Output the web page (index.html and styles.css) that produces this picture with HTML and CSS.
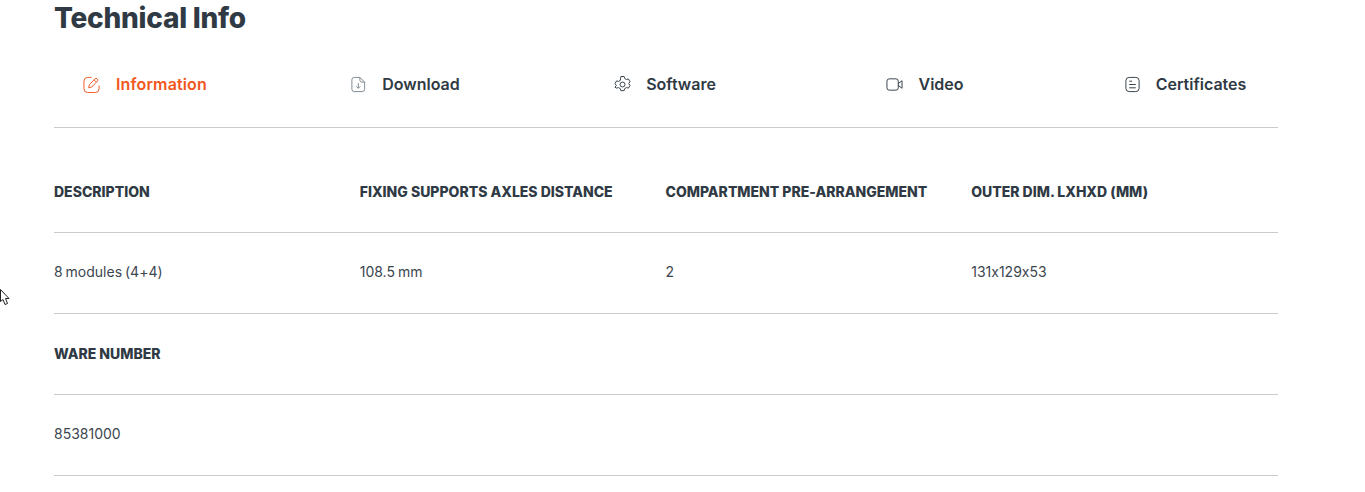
FILE: index.html
```html
<!DOCTYPE html>
<html lang="en">
<head>
<meta charset="utf-8">
<title>Technical Info</title>
<link rel="stylesheet" href="styles.css">
</head>
<body>
<svg class="cursor" width="11" height="18" viewBox="0 0 11 18" aria-hidden="true"><path d="M0.5 0.5V12.5L3 10.5L5 15.5L7.5 14.5L5.5 9.5H9Z" fill="#fff" stroke="#222" stroke-width="1"/></svg>
<main class="page">
  <h1 class="title">Technical Info</h1>
  <nav class="tabs">
    <a class="tab tab-active">
      <svg class="icon" viewBox="0 0 18 18" fill="none" stroke="currentColor" stroke-width="1"><path d="M9 1.500H5a4 4 0 0 0-4 4v8A4 4 0 0 0 5 17.500h8a4 4 0 0 0 4-4V10"/><path d="M6 12.500l.7-3.200 6-6.300a1.500 1.500 0 0 1 2.200 0l.3.300a1.500 1.500 0 0 1 0 2.200l-6 6.200z"/><path d="M11.700 4l2.500 2.500"/></svg>
      <span>Information</span>
    </a>
    <a class="tab">
      <svg class="icon icon-muted" viewBox="0 0 18 18" fill="none" stroke="currentColor" stroke-width="1"><path d="M4.500 1.500h6l5 5v7.500a2.500 2.500 0 0 1-2.500 2.500H4.500A2.500 2.500 0 0 1 2 14V4a2.500 2.500 0 0 1 2.500-2.500z"/><path d="M10.500 1.500v3a2 2 0 0 0 2 2h3"/><path d="M8.800 7.500v5.500M6.800 11l2 2 2-2"/></svg>
      <span>Download</span>
    </a>
    <a class="tab">
      <svg class="icon" viewBox="0 0 18 18" fill="none" stroke="currentColor" stroke-width="1"><path d="M7.300 1.500h3.400l.6 2.100 1.900 1.100 2.100-.5 1.700 2.900-1.500 1.900 1.500 1.900-1.700 2.900-2.100-.5-1.900 1.100-.6 2.100H7.300l-.6-2.100-1.900-1.100-2.100.5L1 12.900l1.500-1.900L1 9.100l1.700-2.900 2.100.5 1.900-1.100z" transform="translate(0 -1)" stroke-linejoin="round"/><circle cx="9" cy="9" r="2.600"/></svg>
      <span>Software</span>
    </a>
    <a class="tab">
      <svg class="icon" viewBox="0 0 18 18" fill="none" stroke="currentColor" stroke-width="1"><rect x="1" y="3" width="12" height="12" rx="2.500"/><path d="M13 8l4-3v8l-4-3"/></svg>
      <span>Video</span>
    </a>
    <a class="tab">
      <svg class="icon" viewBox="0 0 18 18" fill="none" stroke="currentColor" stroke-width="1"><rect x="2" y="1.500" width="14" height="15" rx="3.500"/><path d="M5.500 5.500h3M5.500 9h7M5.500 12.500h7"/></svg>
      <span>Certificates</span>
    </a>
  </nav>
  <section class="specs">
    <div class="row row-head">
      <div>Description</div>
      <div>Fixing supports axles distance</div>
      <div>Compartment pre-arrangement</div>
      <div>Outer dim. LxHxD (mm)</div>
    </div>
    <div class="row">
      <div>8 modules (4+4)</div>
      <div>108.5 mm</div>
      <div>2</div>
      <div>131x129x53</div>
    </div>
    <div class="row row-head">
      <div>Ware number</div>
    </div>
    <div class="row">
      <div>85381000</div>
    </div>
  </section>
</main>
</body>
</html>
```
FILE: styles.css
```css
html, body {
  margin: 0;
  padding: 0;
  background: #fff;
}
body {
  height: 492px;
  overflow: hidden;
  position: relative;
  color: #2f3a44;
  font-family: "Inter", "Liberation Sans", sans-serif;
  font-feature-settings: "calt" 0;
}
.cursor {
  position: absolute;
  left: 0;
  top: 289px;
}
.page {
  width: 1224px;
  margin-left: 54px;
}
.title {
  margin: 0;
  height: 37px;
  font-size: 28px;
  line-height: 37px;
  font-weight: 800;
  letter-spacing: -0.25px;
}
.tabs {
  display: grid;
  grid-template-columns: repeat(5, 260px);
  margin-left: -39px;
  width: 1300px;
  height: 91px;
  align-items: center;
  position: relative;
}
.tabs::after {
  content: "";
  position: absolute;
  left: 39px;
  width: 1224px;
  bottom: 0;
  height: 1px;
  background: #c9cccf;
}
.tab {
  display: flex;
  align-items: center;
  justify-content: center;
  gap: 15px;
  font-size: 16px;
  font-weight: 600;
  color: #2f3a44;
  margin-top: 3px;
}
.tab-active {
  color: #f2561d;
  gap: 16px;
  letter-spacing: 0.15px;
}
.icon {
  width: 17px;
  height: 17px;
  flex: none;
}
.icon-muted {
  color: #7b858e;
}
.specs {
  display: flex;
  flex-direction: column;
}
.row {
  display: grid;
  grid-template-columns: repeat(4, 305.75px);
  height: 80px;
  align-items: center;
  border-bottom: 1px solid #c9cccf;
  font-size: 14px;
  word-spacing: -1px;
  color: #3c464f;
}
.row > div {
  margin-top: -4px;
}
.row-head {
  font-weight: 800;
  font-size: 14px;
  word-spacing: 0;
  text-transform: uppercase;
  color: #2f3a44;
}
.row-head > div {
  margin-top: -2px;
}
.specs .row:first-child {
  height: 104px;
}
.specs .row:first-child > div {
  margin-top: 22px;
}
```
